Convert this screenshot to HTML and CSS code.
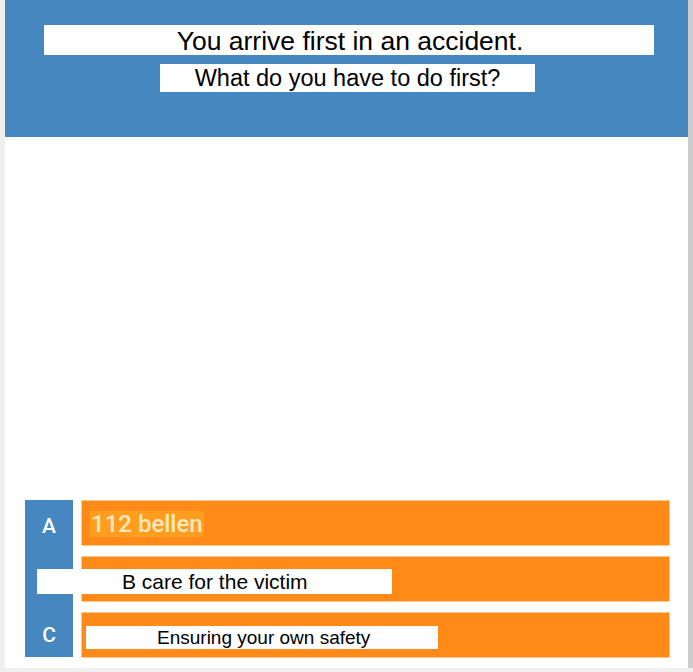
FILE: index.html
```html
<!DOCTYPE html>
<html>
<head>
<meta charset="utf-8">
<link rel="stylesheet" href="styles.css">
</head>
<body>
<div class="frame">
  <header class="header">
    <div class="title"><span>You arrive first in an accident.</span></div>
    <div class="subtitle"><span>What do you have to do first?</span></div>
  </header>
  <main class="main">
    <div class="answers">
      <div class="letters">
        <div class="letter">A</div>
        <div class="letter">B</div>
        <div class="letter">C</div>
      </div>
      <div class="options">
        <div class="option"><span class="opt-text">112 bellen</span></div>
        <div class="option"><div class="overlay overlay-b">B care for the victim</div></div>
        <div class="option"><div class="overlay overlay-c">Ensuring your own safety</div></div>
      </div>
    </div>
  </main>
</div>
</body>
</html>
```

FILE: styles.css
```css
html, body {
  margin: 0;
  padding: 0;
}
body {
  background: #efefef;
  width: 693px;
  height: 672px;
  overflow: hidden;
  font-family: "Liberation Sans", Arial, sans-serif;
}
.frame {
  margin-left: 5px;
  width: 683px;
  height: 668px;
  background: #ffffff;
  border-right: 5px solid #cdcdcd;
  box-sizing: content-box;
}
.header {
  background: #4587be;
  height: 137px;
  padding-top: 25px;
  box-sizing: border-box;
}
.title {
  margin-left: 39px;
  width: 610px;
  height: 30px;
  background: #ffffff;
  display: flex;
  justify-content: center;
  align-items: center;
  font-size: 26.5px;
  line-height: 32px;
  color: #000;
  padding-left: 2px;
  padding-top: 2px;
  box-sizing: border-box;
  overflow: hidden;
}
.subtitle {
  margin-top: 9px;
  margin-left: 155px;
  width: 375px;
  height: 28px;
  background: #ffffff;
  display: flex;
  justify-content: center;
  align-items: center;
  font-size: 23.5px;
  line-height: 28px;
  color: #000;
}
.main {
  height: 531px;
  padding-top: 363px;
  padding-left: 20px;
  box-sizing: border-box;
}
.answers {
  display: flex;
  gap: 8px;
}
.letters {
  width: 48px;
  height: 157px;
  background: #4587be;
  display: flex;
  flex-direction: column;
  gap: 10px;
}
.letter {
  height: 46px;
  display: flex;
  align-items: center;
  justify-content: center;
  color: #ffffff;
  font-family: Roboto, "Liberation Sans", sans-serif;
  font-size: 21px;
  font-weight: 500;
  padding-top: 6px;
  box-sizing: border-box;
}
.letter:last-child {
  padding-top: 0;
  align-items: flex-end;
  padding-bottom: 10px;
}
.options {
  width: 589px;
  display: flex;
  flex-direction: column;
  gap: 10px;
}
.option {
  position: relative;
  height: 46px;
  background: #ff8a17;
  border: 1px solid #ffc98c;
  box-sizing: border-box;
  display: flex;
  align-items: center;
  padding-left: 8px;
}
.opt-text {
  background: #ff9d1e;
  color: #ffe8bf;
  font-family: Roboto, "Liberation Sans", sans-serif;
  font-size: 24px;
  font-weight: 500;
  padding: 0 1px;
  line-height: 26px;
  margin-top: 2px;
}
.overlay {
  position: absolute;
  background: #ffffff;
  color: #000;
  font-family: "Liberation Sans", Arial, sans-serif;
  white-space: nowrap;
}
.overlay-b {
  left: -45px;
  top: 12px;
  width: 355px;
  height: 25px;
  font-size: 21px;
  line-height: 25px;
  padding-left: 85px;
  box-sizing: border-box;
}
.overlay-c {
  left: 4px;
  top: 13px;
  width: 352px;
  height: 23px;
  font-size: 19px;
  line-height: 23px;
  padding-left: 71px;
  box-sizing: border-box;
}
```
